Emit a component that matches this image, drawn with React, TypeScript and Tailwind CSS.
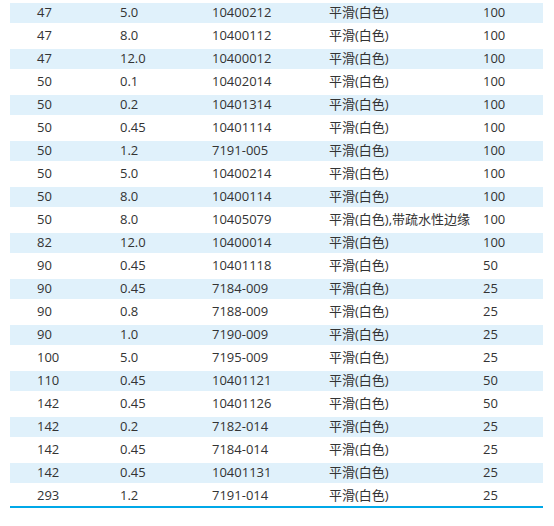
import React from 'react';

type Row = [string, string, string, string, string];

const rows: Row[] = [
  ['47', '5.0', '10400212', '平滑(白色)', '100'],
  ['47', '8.0', '10400112', '平滑(白色)', '100'],
  ['47', '12.0', '10400012', '平滑(白色)', '100'],
  ['50', '0.1', '10402014', '平滑(白色)', '100'],
  ['50', '0.2', '10401314', '平滑(白色)', '100'],
  ['50', '0.45', '10401114', '平滑(白色)', '100'],
  ['50', '1.2', '7191-005', '平滑(白色)', '100'],
  ['50', '5.0', '10400214', '平滑(白色)', '100'],
  ['50', '8.0', '10400114', '平滑(白色)', '100'],
  ['50', '8.0', '10405079', '平滑(白色),带疏水性边缘', '100'],
  ['82', '12.0', '10400014', '平滑(白色)', '100'],
  ['90', '0.45', '10401118', '平滑(白色)', '50'],
  ['90', '0.45', '7184-009', '平滑(白色)', '25'],
  ['90', '0.8', '7188-009', '平滑(白色)', '25'],
  ['90', '1.0', '7190-009', '平滑(白色)', '25'],
  ['100', '5.0', '7195-009', '平滑(白色)', '25'],
  ['110', '0.45', '10401121', '平滑(白色)', '50'],
  ['142', '0.45', '10401126', '平滑(白色)', '50'],
  ['142', '0.2', '7182-014', '平滑(白色)', '25'],
  ['142', '0.45', '7184-014', '平滑(白色)', '25'],
  ['142', '0.45', '10401131', '平滑(白色)', '25'],
  ['293', '1.2', '7191-014', '平滑(白色)', '25'],
];

export default function App() {
  return (
    <div className="w-[554px] h-[526px] bg-white pl-[10px] pr-[11px] font-['Open_Sans','Noto_Sans_CJK_SC',sans-serif] text-[13px] text-[#333]">
      <div className="border-b-2 border-[#00a8e8]">
        {rows.map((r, i) => (
          <div
            key={i}
            className={`flex h-[23px] items-center whitespace-nowrap border-t-[3px] border-white ${i % 2 === 0 ? 'bg-[#e0f1fb]' : 'bg-white'}`}
          >
            <div className="w-[83px] pl-[27px]">{r[0]}</div>
            <div className="w-[92px] pl-[27px]">{r[1]}</div>
            <div className="w-[117px] pl-[27px]">{r[2]}</div>
            <div className="w-[176px] pl-[27px]">{r[3]}</div>
            <div className="flex-1 pl-[5px]">{r[4]}</div>
          </div>
        ))}
      </div>
    </div>
  );
}
